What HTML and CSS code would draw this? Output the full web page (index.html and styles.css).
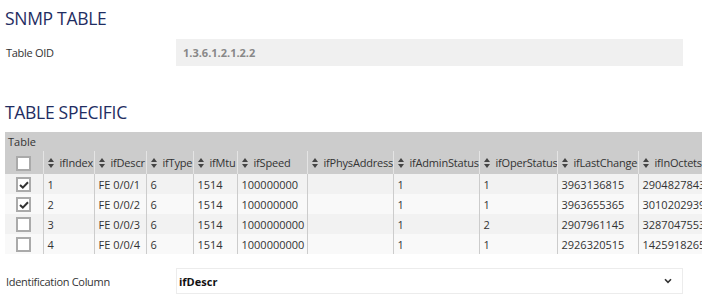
FILE: index.html
```html
<!DOCTYPE html>
<html lang="en">
<head>
  <meta charset="UTF-8" />
  <title>SNMP Table</title>
  <link rel="stylesheet" href="styles.css">
</head>
<body>

<h2 class="section-title">SNMP TABLE</h2>

<div class="field-row">
  <label class="field-label">Table OID</label>
  <div class="field-readonly">1.3.6.1.2.1.2.2</div>
</div>

<h2 class="section-title second">TABLE SPECIFIC</h2>

<div class="table-wrap">
  <div class="table-caption">Table</div>
  <table class="snmp-table">
    <colgroup>
      <col style="width:38px"><col style="width:51px"><col style="width:52px"><col style="width:47px">
      <col style="width:44px"><col style="width:70px"><col style="width:86px"><col style="width:86px">
      <col style="width:78px"><col style="width:81px"><col style="width:80px">
    </colgroup>
    <thead>
      <tr>
        <th class="check-col"><span class="box"></span></th>
        <th><span class="sort"></span>ifIndex</th>
        <th><span class="sort"></span>ifDescr</th>
        <th><span class="sort"></span>ifType</th>
        <th><span class="sort"></span>ifMtu</th>
        <th><span class="sort"></span>ifSpeed</th>
        <th><span class="sort"></span>ifPhysAddress</th>
        <th><span class="sort"></span>ifAdminStatus</th>
        <th><span class="sort"></span>ifOperStatus</th>
        <th><span class="sort"></span>ifLastChange</th>
        <th><span class="sort"></span>ifInOctets</th>
      </tr>
    </thead>
    <tbody id="rows"></tbody>
  </table>
</div>

<div class="field-row ident">
  <label class="field-label">Identification Column</label>
  <div class="field-select">
    <span>ifDescr</span>
    <svg class="chevron" width="8" height="6" viewBox="0 0 8 6"><path d="M1 1.2 L4 4.4 L7 1.2" fill="none" stroke="#333" stroke-width="1.6"/></svg>
  </div>
</div>

<script>
  const rows = [
    { checked: true,  idx: 1, descr: 'FE 0/0/1', type: 6, mtu: 1514, speed: '100000000',  phys: '', admin: 1, oper: 1, last: '3963136815', inOct: '2904827843' },
    { checked: true,  idx: 2, descr: 'FE 0/0/2', type: 6, mtu: 1514, speed: '100000000',  phys: '', admin: 1, oper: 1, last: '3963655365', inOct: '3010202939' },
    { checked: false, idx: 3, descr: 'FE 0/0/3', type: 6, mtu: 1514, speed: '1000000000', phys: '', admin: 1, oper: 2, last: '2907961145', inOct: '3287047553' },
    { checked: false, idx: 4, descr: 'FE 0/0/4', type: 6, mtu: 1514, speed: '1000000000', phys: '', admin: 1, oper: 1, last: '2926320515', inOct: '1425918265' }
  ];

  const tick = '<svg width="10" height="8" viewBox="0 0 10 8"><path d="M1 4 L3.8 6.6 L9 1.2" fill="none" stroke="#333" stroke-width="2"/></svg>';
  const body = document.getElementById('rows');

  rows.forEach(r => {
    const tr = document.createElement('tr');
    tr.innerHTML = `
      <td class="check-col"><span class="box">${r.checked ? tick : ''}</span></td>
      <td>${r.idx}</td><td>${r.descr}</td><td>${r.type}</td><td>${r.mtu}</td>
      <td>${r.speed}</td><td>${r.phys}</td><td>${r.admin}</td><td>${r.oper}</td>
      <td>${r.last}</td><td>${r.inOct}</td>
    `;
    body.appendChild(tr);
  });
</script>

</body>
</html>
```

FILE: styles.css
```css
body {
  font-family: 'Open Sans', 'Noto Sans', sans-serif;
  color: #333;
  margin: 0;
  padding: 0 0 0 5px;
  background: white;
  overflow: hidden;
}
.section-title {
  font-size: 17.5px;
  font-weight: 400;
  letter-spacing: -0.3px;
  color: #1f2d62;
  margin: 5px 0 0 0;
  line-height: 26px;
}
.section-title.second {
  margin-top: 33px;
}
.field-row {
  display: flex;
  align-items: center;
  margin-top: 8px;
  width: 678px;
}
.field-label {
  width: 170px;
  font-size: 11px;
  letter-spacing: -0.3px;
  padding-left: 1px;
}
.field-readonly {
  flex: 1;
  height: 27px;
  line-height: 27px;
  background-color: #f0f0f0;
  color: #888;
  font-weight: 700;
  font-size: 11px;
  padding-left: 7px;
}
.table-wrap {
  margin-top: 7px;
  overflow: hidden;
}
.table-caption {
  background-color: #cccccc;
  height: 19px;
  line-height: 19px;
  font-size: 11px;
  padding-left: 3px;
}
.snmp-table {
  table-layout: fixed;
  border-collapse: collapse;
  width: 713px;
  font-size: 11px;
}
.snmp-table th {
  background-color: #cccccc;
  font-weight: 400;
  text-align: left;
  height: 23px;
  padding: 0 0 0 4px;
  letter-spacing: -0.2px;
  border-left: 1px solid #e4e4e4;
  white-space: nowrap;
  overflow: hidden;
}
.snmp-table td {
  height: 20px;
  padding: 0 0 0 4px;
  border-left: 1px solid #cccccc;
  white-space: nowrap;
  overflow: hidden;
}
.snmp-table th:first-child,
.snmp-table td:first-child {
  border-left: none;
}
.snmp-table tbody tr:nth-child(odd) {
  background-color: #f2f2f2;
}
.snmp-table tbody tr:nth-child(even) {
  background-color: #f9f9f9;
}
.snmp-table .check-col {
  padding: 0;
  text-align: center;
}
.box {
  display: inline-flex;
  align-items: center;
  justify-content: center;
  width: 15px;
  height: 15px;
  box-sizing: border-box;
  border: 2px solid #aaaaaa;
  background: white;
  vertical-align: middle;
}
.sort {
  display: inline-block;
  width: 7px;
  height: 10px;
  margin-right: 5px;
  vertical-align: -1px;
  position: relative;
}
.sort::before,
.sort::after {
  content: '';
  position: absolute;
  left: 0;
  border-left: 3.5px solid transparent;
  border-right: 3.5px solid transparent;
}
.sort::before {
  top: 0;
  border-bottom: 4px solid #444;
}
.sort::after {
  bottom: 0;
  border-top: 4px solid #444;
}
.field-row.ident {
  margin-top: 14px;
}
.field-select {
  flex: 1;
  height: 24px;
  border: 1px solid #ececec;
  display: flex;
  align-items: center;
  justify-content: space-between;
  padding: 0 10px 0 2px;
  font-size: 11px;
  font-weight: 700;
  color: #111;
}
```
